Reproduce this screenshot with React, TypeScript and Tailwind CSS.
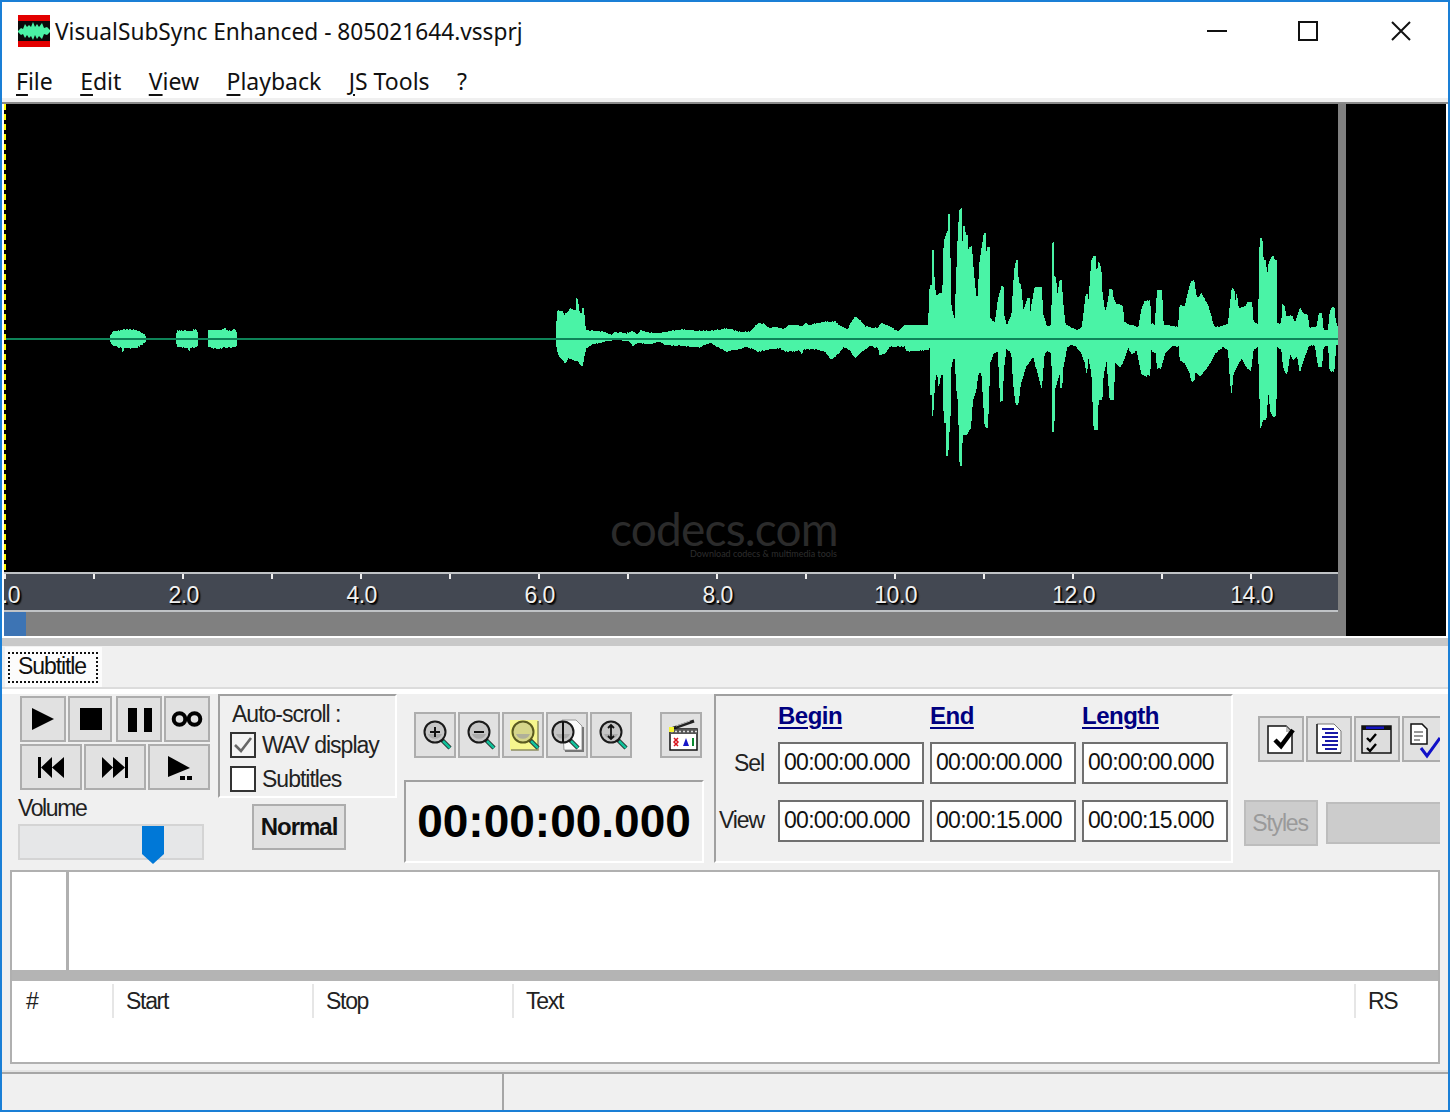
import React from "react";

type P = [number, number];
const z6 = (a: number[]): P[] => { const o: P[] = []; for (let i = 0; i < a.length; i += 2) o.push([900 + a[i] / 3, 190 + a[i + 1] / 3]); return o; };
const z11 = (a: number[]): P[] => { const o: P[] = []; for (let i = 0; i < a.length; i += 2) o.push([550 + a[i] / 3, 290 + a[i + 1] / 3]); return o; };

const midTop = z11([18,115,24,60,38,65,42,75,55,65,62,55,70,60,78,60,79,25,84,25,85,60,95,75,97,55,102,55,103,95,108,120,130,122,160,125,185,135,195,127,230,130,248,122,262,135,272,122,300,128,340,128,365,122,400,118,440,122,490,122,530,115,545,118,565,125,600,125,625,100,640,100,650,112,680,112,700,118,720,105,745,105,752,110,768,100,775,105,825,95,855,95,870,108,895,118,905,95,915,80,930,90,945,108,970,115,985,112,995,98,1005,105,1020,110,1045,125,1065,105,1100,105,1135,105]);
const midBot = z11([18,150,22,185,30,200,45,220,55,205,70,210,85,215,97,228,102,200,108,175,125,165,160,155,200,150,240,155,250,168,262,158,300,162,330,155,345,165,400,168,450,172,480,158,530,185,560,178,590,170,625,185,660,178,690,175,700,180,710,185,750,182,755,192,760,178,800,178,825,185,845,208,865,190,880,170,900,180,915,203,935,185,960,168,985,175,990,197,1005,190,1020,170,1065,170,1072,185,1135,180]);
const rightTop = z6([90,285,97,285,98,180,101,180,102,255,107,320,115,312,128,305,132,155,144,120,146,72,150,72,151,330,155,355,165,395,168,295,175,115,180,55,185,55,186,190,192,102,197,135,203,135,205,190,210,170,215,170,218,215,225,290,232,345,240,210,252,130,257,130,258,195,264,170,269,170,270,385,285,400,295,325,305,290,311,290,312,375,320,410,335,375,343,245,349,210,353,210,355,280,362,280,370,365,383,325,389,325,390,375,405,290,425,290,428,370,440,410,455,405,457,157,461,157,462,260,468,260,470,330,480,270,485,270,487,320,495,400,510,410,530,420,545,415,550,380,558,312,562,312,563,375,575,210,583,198,587,198,590,275,595,215,603,235,606,300,615,370,622,345,630,295,636,295,640,325,650,345,656,342,668,350,672,395,690,405,710,410,715,415,725,360,735,332,750,332,752,400,765,405,772,300,785,300,790,405,810,405,835,410,840,345,855,350,865,305,875,272,882,272,890,325,905,310,912,325,925,350,935,385,942,410,965,410,985,400,990,350,996,295,1002,295,1005,350,1010,310,1015,355,1035,350,1045,335,1055,335,1060,395,1075,405,1080,145,1086,145,1090,210,1098,210,1100,295,1105,225,1118,195,1125,210,1130,210,1131,400,1145,400,1147,342,1152,345,1158,380,1175,375,1185,400,1200,355,1210,370,1222,375,1228,415,1250,410,1258,368,1265,368,1270,420,1285,420,1290,365,1298,350,1302,350,1306,390,1316,420]);
const rightBot = z6([90,470,91,615,97,615,98,685,102,615,107,555,113,555,116,590,122,555,130,555,132,700,138,700,140,798,144,798,146,725,150,725,152,535,160,505,165,505,170,600,175,640,178,770,180,828,185,828,187,735,200,735,205,725,212,715,218,630,228,600,235,550,245,550,255,710,263,715,270,520,280,490,295,485,297,550,302,635,308,635,310,550,318,475,335,490,340,580,348,645,354,645,362,580,378,530,400,500,412,545,425,595,432,500,440,480,455,490,458,725,462,725,464,600,480,545,482,595,486,595,488,540,500,475,510,465,530,470,545,490,556,520,560,555,565,500,575,550,582,720,592,720,595,630,606,630,610,555,620,510,630,630,640,630,645,520,660,530,672,510,685,470,695,495,710,480,725,550,735,560,750,555,752,480,768,490,772,535,782,535,795,490,815,468,838,470,840,510,855,520,870,550,875,575,882,575,885,545,900,558,915,540,930,520,945,490,970,470,985,480,990,560,995,615,998,560,1005,540,1025,505,1040,530,1052,545,1060,480,1075,470,1082,715,1088,690,1098,690,1105,600,1112,665,1120,680,1128,680,1130,470,1145,480,1150,530,1160,555,1170,490,1180,510,1192,500,1200,545,1210,510,1225,470,1245,465,1255,530,1265,530,1270,470,1285,465,1290,545,1302,545,1308,465,1316,465]);

const interp = (pts: P[], x: number) => {
  if (x <= pts[0][0]) return pts[0][1];
  for (let i = 1; i < pts.length; i++) {
    if (x <= pts[i][0]) {
      const [a, b] = pts[i - 1];
      const [c, d] = pts[i];
      return c === a ? d : b + ((d - b) * (x - a)) / (c - a);
    }
  }
  return pts[pts.length - 1][1];
};
const jitter = (x: number) => {
  const v = Math.sin(x * 12.9898) * 43758.5453;
  return (v - Math.floor(v)) * 2 - 1;
};
const envelope = (top: P[], bot: P[], x0: number, x1: number, j: number) => {
  const t: string[] = [];
  const b: string[] = [];
  for (let x = x0; x < x1; x++) {
    const ty = Math.round(Math.min(interp(top, x + 0.17), interp(top, x + 0.5), interp(top, x + 0.83)) + jitter(x) * j);
    const by = Math.round(Math.max(interp(bot, x + 0.17), interp(bot, x + 0.5), interp(bot, x + 0.83)) - jitter(x + 40) * j);
    t.push(`${x},${ty} ${x + 1},${ty}`);
    b.unshift(`${x + 1},${by} ${x},${by}`);
  }
  return `M${t.join(" L")} L${b.join(" L")}Z`;
};
const wavePaths = [
  envelope([[110, 336], [113, 332], [120, 330], [128, 329], [136, 330], [143, 333], [146, 337]], [[110, 342], [114, 346], [122, 348], [123, 352], [124, 348], [136, 348], [142, 345], [146, 341]], 110, 146, 0.6),
  envelope([[176, 335], [178, 330], [184, 331], [192, 331], [195, 329], [197, 331], [198, 336]], [[176, 343], [178, 347], [188, 348], [189, 351], [190, 348], [197, 347], [198, 342]], 176, 198, 0.6),
  envelope([[208, 330], [222, 330], [225, 328], [226, 330], [232, 331], [234, 329], [236, 331], [237, 337]], [[208, 347], [216, 349], [222, 348], [236, 347], [237, 342]], 208, 237, 0.5),
  envelope(midTop.concat(rightTop), midBot.concat(rightBot), 556, 1338, 0.5),
];

const Btn = ({ cls, children }: { cls: string; children?: React.ReactNode }) => (
  <div className={`shrink-0 border-2 border-[#adadad] bg-[#e1e1e1] ${cls}`}>{children}</div>
);

const Sq = ({ vb, children }: { vb: string; children: React.ReactNode }) => (
  <svg viewBox={vb} className="block h-full w-full">{children}</svg>
);

const Lens = ({ cx = 19, cy = 18, fill = "#c6c6c6", ring = "#1a1a1a", children }: { cx?: number; cy?: number; fill?: string; ring?: string; children?: React.ReactNode }) => (
  <>
    <line x1={cx + 7} y1={cy + 8} x2={cx + 15} y2={cy + 16} stroke="#222" strokeWidth="4.5" />
    <line x1={cx + 8} y1={cy + 9} x2={cx + 15} y2={cy + 16} stroke="#12c09a" strokeWidth="2.6" />
    <circle cx={cx} cy={cy} r={10.5} fill={fill} stroke={ring} strokeWidth="2" />
    <path d={`M${cx - 7} ${cy + 2}a7.5 7.5 0 0 0 14 0`} fill="#9f9f9f" opacity=".7" />
    {children}
  </>
);

const ticks = Array.from({ length: 15 }, (_, i) => 4.7 + i * 89);
const labels: [string, number][] = [["0.0", 4.7], ["2.0", 183.7], ["4.0", 361.7], ["6.0", 539.7], ["8.0", 717.7], ["10.0", 895.7], ["12.0", 1073.7], ["14.0", 1251.7]];

const Field = ({ v }: { v: string }) => (
  <div className="flex h-[42px] w-[146px] items-center border-2 border-[#707070] bg-white pb-[2px] pl-[4px] text-[23px] tracking-[-0.7px] text-[#111]">{v}</div>
);

const Head = ({ t, w }: { t: string; w: string }) => (
  <div className={`flex h-[34px] items-center border-r-2 border-[#e6e6e6] pl-[12px] ${w}`}>{t}</div>
);

export default function App() {
  return (
    <div className="flex h-[1112px] w-[1450px] flex-col overflow-hidden border-2 border-[#1a7fd6] bg-white font-['Liberation_Sans',sans-serif] text-[#111]">
      {/* title */}
      <div className="flex h-[58px] shrink-0 items-center pl-[16px] font-['Noto_Sans',sans-serif]">
        <svg width="32" height="32" viewBox="0 0 32 32" className="shrink-0">
          <rect width="32" height="32" fill="#e30000" />
          <rect y="6" width="32" height="20" fill="#0a0a0a" />
          <path d="M0 16 L3 13 L5 14 L7 9 L9 12 L11 10 L13 12 L15 7 L17 12 L19 9 L21 12 L24 8 L26 13 L29 12 L32 15 V17 L29 20 L26 19 L24 24 L21 21 L19 24 L17 20 L15 25 L13 21 L11 23 L9 20 L7 23 L5 19 L3 20 L0 17Z" fill="#4af2a5" />
        </svg>
        <div className="ml-[5px] pt-[2px] text-[22.7px] leading-none text-[#111]">VisualSubSync Enhanced - 805021644.vssprj</div>
        <div className="ml-auto flex">
          <div className="flex h-[54px] w-[90px] items-center justify-center"><div className="h-[2px] w-[20px] bg-[#111]" /></div>
          <div className="flex h-[54px] w-[92px] items-center justify-center"><div className="h-[20px] w-[20px] border-2 border-[#111]" /></div>
          <div className="flex h-[54px] w-[94px] items-center justify-center">
            <svg width="20" height="20" viewBox="0 0 20 20"><path d="M1 1 L19 19 M19 1 L1 19" stroke="#111" strokeWidth="2" /></svg>
          </div>
        </div>
      </div>
      {/* menu */}
      <div className="flex h-[38px] shrink-0 items-center gap-[27.4px] pl-[14px] pt-[4px] font-['Noto_Sans',sans-serif] text-[23px] leading-none text-[#111]">
        <span><span className="underline underline-offset-[4px]">F</span>ile</span>
        <span><span className="underline underline-offset-[4px]">E</span>dit</span>
        <span><span className="underline underline-offset-[4px]">V</span>iew</span>
        <span><span className="underline underline-offset-[4px]">P</span>layback</span>
        <span><span className="underline underline-offset-[4px]">J</span>S Tools</span>
        <span>?</span>
      </div>
      <div className="h-[4px] shrink-0 bg-[#f0f0f0]" />
      <div className="h-[2px] shrink-0 bg-[#8a8a8a]" />
      {/* wave */}
      <div className="flex h-[532px] shrink-0 pl-[2px] pr-[2px]">
        <div className="flex w-[1334px] shrink-0 flex-col">
          <div className="relative h-[468px] bg-black">
            <svg viewBox="4 104 1334 468" width="1334" height="468" className="block" shapeRendering="crispEdges">
              {wavePaths.map((d, i) => <path key={i} d={d} fill="#4af3a6" />)}
              <rect x="4" y="338" width="1334" height="2" fill="#0e8358" />
              <line x1="5" y1="104" x2="5" y2="572" stroke="#ffff00" strokeWidth="2" strokeDasharray="6 4" />
            </svg>
            <div className="absolute left-[606px] top-[404px] font-['Lato',sans-serif] text-[46px] leading-[42px] tracking-[-0.8px] text-[#2b2b2b]">codecs.com</div>
            <div className="absolute left-[686px] top-[444px] font-['Lato',sans-serif] text-[9px] leading-[12px] text-[#2e2e2e]">Download codecs &amp; multimedia tools</div>
          </div>
          <div className="relative h-[40px] overflow-hidden border-y-2 border-[#c0c3c6] bg-[#434852]">
            {ticks.map((x) => (
              <div key={x} className="absolute top-0 h-[5px] w-[2px] bg-[#eee]" style={{ left: x - 5 }} />
            ))}
            {labels.map(([t, x]) => (
              <div key={t} className="absolute top-[8px] w-[80px] text-center text-[23px] leading-[26px] tracking-[-0.5px] text-[#f0f0f0] [text-shadow:1px_1px_0_#000,2px_2px_1px_#111]" style={{ left: x - 44 }}>{t}</div>
            ))}
          </div>
          <div className="h-[24px] bg-[#808080]"><div className="h-full w-[22px] bg-[#3d74b4]" /></div>
        </div>
        <div className="w-[8px] shrink-0 bg-[#808080]" />
        <div className="flex-1 bg-black" />
      </div>
      <div className="h-[2px] shrink-0 bg-white" />
      <div className="h-[8px] shrink-0 bg-[#c8c8c8]" />
      {/* tabs */}
      <div className="flex h-[41px] shrink-0 items-end bg-[#f0f0f0] pl-[3px]">
        <div className="flex h-[40px] w-[97px] items-start bg-[#fcfcfc] pl-[3px] pt-[5px]">
          <div className="flex h-[31px] w-[90px] items-center justify-center border-2 border-dotted border-[#111] pb-[2px] pr-[2px] text-[23px] leading-none tracking-[-1.1px]">Subtitle</div>
        </div>
      </div>
      <div className="h-[2px] shrink-0 bg-[#dcdcdc]" />
      <div className="h-[5px] shrink-0 bg-white" />
      {/* toolbar */}
      <div className="flex h-[176px] shrink-0 bg-[#f0f0f0] pl-[16px] text-[23px] leading-none tracking-[-1px] text-[#222]">
        {/* col1 */}
        <div className="w-[192px] shrink-0">
          <div className="ml-[2px] mt-[2px] flex gap-[2px]">
            <Btn cls="h-[46px] w-[46px]"><Sq vb="0 0 42 42"><path d="M10 10 L32 21 L10 32Z" fill="#000" /></Sq></Btn>
            <Btn cls="h-[46px] w-[44px]"><Sq vb="0 0 40 42"><rect x="10" y="10" width="22" height="22" fill="#000" /></Sq></Btn>
            <Btn cls="ml-[2px] h-[46px] w-[46px]"><Sq vb="0 0 42 42"><rect x="10" y="10" width="9" height="24" fill="#000" /><rect x="26" y="10" width="8" height="24" fill="#000" /></Sq></Btn>
            <Btn cls="h-[46px] w-[46px]"><Sq vb="0 0 42 42"><circle cx="13.5" cy="21" r="5.8" fill="none" stroke="#000" strokeWidth="4" /><circle cx="28.5" cy="21" r="5.8" fill="none" stroke="#000" strokeWidth="4" /></Sq></Btn>
          </div>
          <div className="ml-[2px] mt-[2px] flex gap-[2px]">
            <Btn cls="h-[46px] w-[62px]"><Sq vb="0 0 58 42"><path d="M16 11h3v21h-3zM19 21.5 L30 11 V32Z M30 21.5 L42 11 V32Z" fill="#000" /></Sq></Btn>
            <Btn cls="h-[46px] w-[62px]"><Sq vb="0 0 58 42"><path d="M16 11 L27 21.5 L16 32Z M27 11 L39 21.5 L27 32Z M39 11h3v21h-3z" fill="#000" /></Sq></Btn>
            <Btn cls="h-[46px] w-[62px]"><Sq vb="0 0 58 42"><path d="M18 10 L40 22 L18 31Z" fill="#000" /><rect x="30" y="30" width="5" height="4" fill="#000" /><rect x="37" y="30" width="5" height="4" fill="#000" /></Sq></Btn>
          </div>
          <div className="mt-[5px] h-[26px] leading-[26px] tracking-[-1.4px]">Volume</div>
          <div className="relative mt-[3px] h-[36px] w-[186px] border-2 border-[#d4d4d4] bg-[#e6e7e8]">
            <svg width="22" height="38" viewBox="0 0 22 38" className="absolute left-[122px] top-0"><path d="M0 0H22V28L11 38L0 28Z" fill="#0078d7" /></svg>
          </div>
        </div>
        {/* col2 */}
        <div className="ml-[8px] w-[179px] shrink-0">
          <div className="h-[104px] border-2 border-b-white border-l-[#a0a0a0] border-r-white border-t-[#a0a0a0] pl-[12px]">
            <div className="h-[32px] pt-[5px] leading-[26px]">Auto-scroll :</div>
            <div className="-ml-[2px] flex h-[34px] items-center gap-[6px]">
              <div className="h-[26px] w-[26px] border-2 border-[#333] bg-[#f4f4f4]">
                <svg viewBox="0 0 22 22" className="block h-full w-full"><path d="M3 11 L9 17 L19 4" fill="none" stroke="#666" strokeWidth="2.6" /></svg>
              </div>
              <span>WAV display</span>
            </div>
            <div className="-ml-[2px] flex h-[34px] items-center gap-[6px]">
              <div className="h-[26px] w-[26px] border-2 border-[#333] bg-white" />
              <span>Subtitles</span>
            </div>
          </div>
          <Btn cls="ml-[34px] mt-[6px] flex h-[46px] w-[94px] items-center justify-center"><span className="text-[24px] font-bold tracking-[-1px] text-[#111]">Normal</span></Btn>
        </div>
        {/* col3 */}
        <div className="ml-[7px] w-[300px] shrink-0">
          <div className="ml-[10px] mt-[18px] flex">
            <div className="flex gap-[2px]">
              <Btn cls="h-[46px] w-[42px]"><Sq vb="0 0 38 42"><Lens><path d="M14 18h10M19 13v10" stroke="#111" strokeWidth="2" /></Lens></Sq></Btn>
              <Btn cls="h-[46px] w-[42px]"><Sq vb="0 0 38 42"><Lens><path d="M14 18h10" stroke="#111" strokeWidth="2" /></Lens></Sq></Btn>
              <Btn cls="h-[46px] w-[42px]"><Sq vb="0 0 38 42"><rect x="6" y="6" width="28" height="30" fill="#f6f68e" /><path d="M34 7v29H7" fill="none" stroke="#8d8d60" strokeWidth="1.5" /><Lens fill="#d6d68a" ring="#5a5a20" /></Sq></Btn>
              <Btn cls="h-[46px] w-[42px]"><Sq vb="0 0 38 42"><path d="M14 6H28L34 12V36H16Z" fill="#fbfbfb" stroke="#999" strokeWidth="1" /><path d="M35 13V37H17" fill="none" stroke="#777" strokeWidth="2" /><Lens cx={15} cy={18}><path d="M15 8v20" stroke="#111" strokeWidth="2" /></Lens></Sq></Btn>
              <Btn cls="h-[46px] w-[42px]"><Sq vb="0 0 38 42"><Lens><path d="M19 11v14M16 14l3-3 3 3M16 22l3 3 3-3" fill="none" stroke="#111" strokeWidth="1.8" /></Lens></Sq></Btn>
            </div>
            <Btn cls="ml-[28px] h-[46px] w-[42px]">
              <Sq vb="0 0 38 42">
                <path d="M9 15 L32 7" stroke="#222" strokeWidth="3" />
                <path d="M14 12 L28 7" stroke="#bbb" strokeWidth="1" />
                <rect x="8" y="15" width="27" height="21" fill="#fff" stroke="#111" strokeWidth="1.5" />
                <rect x="8" y="15" width="27" height="5" fill="#555" />
                <path d="M9 17.5h26" stroke="#ddd" strokeWidth="1.5" strokeDasharray="2 2" />
                <rect x="7" y="13" width="5" height="5" fill="#f5f532" />
                <path d="M12 24l4 4-4 4M16 24l-4 4 4 4" fill="none" stroke="#d8141e" strokeWidth="1.5" />
                <path d="M21 32l3-8 3 8z" fill="#1616c8" />
                <rect x="30" y="24" width="2" height="8" fill="#0a8a30" />
              </Sq>
            </Btn>
          </div>
          <div className="mt-[22px] flex h-[83px] w-[300px] items-center justify-center border-2 border-b-white border-l-[#a0a0a0] border-r-white border-t-[#a0a0a0] pb-[2px] text-[46px] font-bold tracking-normal text-black">00:00:00.000</div>
        </div>
        {/* col4 */}
        <div className="ml-[10px] h-[169px] w-[519px] shrink-0 border-2 border-b-white border-l-[#a0a0a0] border-r-white border-t-[#a0a0a0] pl-[62px]">
          <div className="flex h-[46px] gap-[6px] pt-[6px] text-[24px] font-bold tracking-[-0.5px] text-[#000080]">
            <div className="w-[146px] leading-[28px]"><span className="underline underline-offset-[3px]">Begin</span></div>
            <div className="w-[146px] leading-[28px]"><span className="underline underline-offset-[3px]">End</span></div>
            <div className="w-[146px] leading-[28px]"><span className="underline underline-offset-[3px]">Length</span></div>
          </div>
          <div className="relative flex gap-[6px]">
            <div className="absolute -left-[62px] top-0 flex h-[42px] w-[48px] items-center justify-end tracking-[-1.1px]">Sel</div>
            <Field v="00:00:00.000" /><Field v="00:00:00.000" /><Field v="00:00:00.000" />
          </div>
          <div className="relative mt-[16px] flex gap-[6px]">
            <div className="absolute -left-[62px] top-0 flex h-[42px] w-[48px] items-center justify-end pb-[2px] tracking-[-1.1px]">View</div>
            <Field v="00:00:00.000" /><Field v="00:00:15.000" /><Field v="00:00:15.000" />
          </div>
        </div>
        {/* col5 */}
        <div className="w-[207px] shrink-0 overflow-hidden pt-[22px]">
          <div className="ml-[25px] flex gap-[2px]">
            <Btn cls="h-[46px] w-[46px]"><Sq vb="0 0 42 42">
              <path d="M8 8H26L32 14V35H8Z" fill="#fff" stroke="#111" strokeWidth="1.5" />
              <path d="M26 8L32 14H26Z" fill="#bbb" />
              <path d="M15 22L21 28L33 12" fill="none" stroke="#000" strokeWidth="4.5" />
            </Sq></Btn>
            <Btn cls="h-[46px] w-[46px]"><Sq vb="0 0 42 42">
              <path d="M9 6H26L33 13V35H9Z" fill="#fff" stroke="#777" strokeWidth="1" />
              <path d="M9 6V35H33" fill="none" stroke="#222" strokeWidth="1.5" />
              <path d="M14 11h12M17 15h13M14 19h16M17 23h13M14 27h16M17 31h12" stroke="#1a1aa8" strokeWidth="2" />
            </Sq></Btn>
            <Btn cls="h-[46px] w-[46px]"><Sq vb="0 0 42 42">
              <rect x="6" y="8" width="29" height="27" fill="#ddd" stroke="#111" strokeWidth="1.5" />
              <rect x="6" y="8" width="29" height="4" fill="#111" />
              <rect x="10" y="8.5" width="18" height="2.5" fill="#1414c0" />
              <path d="M11 20l3 3 6-7M11 30l3 3 6-7" fill="none" stroke="#000" strokeWidth="2.4" />
            </Sq></Btn>
            <Btn cls="h-[46px] w-[46px]"><Sq vb="0 0 42 42">
              <path d="M7 6H18L23 11V26H7Z" fill="#fff" stroke="#111" strokeWidth="1.5" />
              <path d="M10 14h9M10 18h9M10 22h6" stroke="#777" strokeWidth="1.5" />
              <path d="M17 30L23 38L36 20" fill="none" stroke="#1111c8" strokeWidth="3" />
            </Sq></Btn>
          </div>
          <div className="ml-[11px] mt-[38px] flex items-center gap-[8px] text-[#9a9a9a]">
            <div className="flex h-[46px] w-[74px] shrink-0 items-center justify-center border-2 border-[#bdbdbd] bg-[#cccccc] pr-[2px] tracking-[-1.2px]">Styles</div>
            <div className="h-[42px] w-[130px] shrink-0 border-2 border-[#bdbdbd] bg-[#cccccc]" />
          </div>
        </div>
      </div>
      {/* list panels */}
      <div className="shrink-0 bg-[#f0f0f0] pl-[8px] pr-[8px]">
        <div className="flex h-[194px] flex-col border-x-2 border-y-2 border-[#b0b0b0] bg-white">
          <div className="flex h-[98px] shrink-0"><div className="w-[57px] shrink-0 border-r-[3px] border-[#b0b0b0]" /></div>
          <div className="h-[11px] shrink-0 bg-[#b4b4b4]" />
          <div className="flex pt-[3px] text-[23px] leading-none tracking-[-1.3px] text-[#222]">
            <div className="flex h-[34px] w-[102px] items-center border-r-2 border-[#e6e6e6] pl-[14px]">#</div>
            <Head t="Start" w="w-[200px]" />
            <Head t="Stop" w="w-[200px]" />
            <Head t="Text" w="w-[842px]" />
            <div className="flex h-[34px] items-center pl-[12px]">RS</div>
          </div>
        </div>
      </div>
      <div className="h-[6px] shrink-0 bg-[#f0f0f0]" />
      <div className="h-[2px] shrink-0 bg-[#e4e4e4]" />
      {/* status */}
      <div className="flex h-[38px] shrink-0 border-t-2 border-[#a6a6a6] bg-[#f0f0f0]">
        <div className="w-[502px] shrink-0 border-r-2 border-[#a6a6a6]" />
      </div>
    </div>
  );
}
